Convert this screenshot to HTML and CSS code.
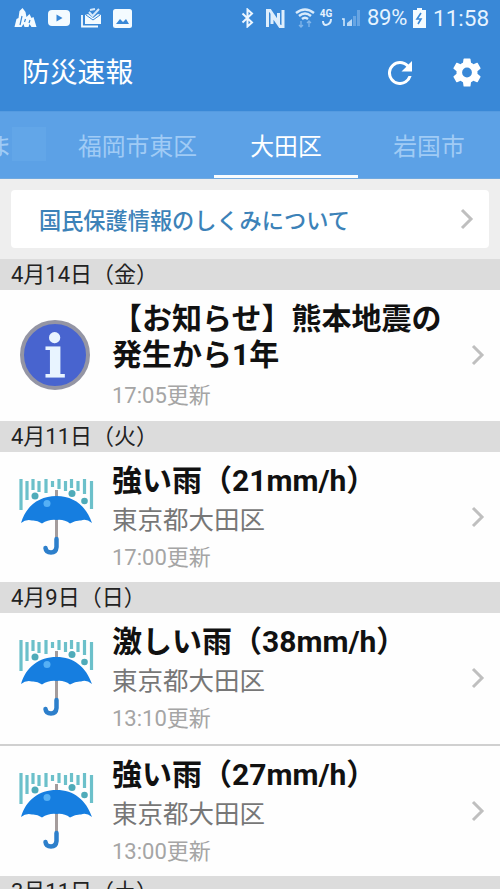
FILE: index.html
```html
<!DOCTYPE html>
<html lang="ja">
<head>
<meta charset="utf-8">
<title>防災速報</title>
<link rel="stylesheet" href="styles.css">
</head>
<body>
<svg width="0" height="0" class="defs">
  <symbol id="chevron" viewBox="0 0 14 22"><path d="M2 2l9 9-9 9" fill="none" stroke="currentColor" stroke-width="3"/></symbol>
  <symbol id="umbrella" viewBox="0 0 76 78">
    <g stroke="#6cc0ca" stroke-width="3.200">
      <path d="M3 1v31M9 3v19M15 1v11M21 3v11M28 1v14M34.500 3v6M41 1v10M47.500 3v10M53.500 1v9M60 3v10M66.500 1v15M73.500 3v28"/>
    </g>
    <g fill="#4fabb9"><circle cx="17" cy="18" r="3.500"/><circle cx="54" cy="15.500" r="3.500"/><circle cx="66.500" cy="23" r="3.300"/></g>
    <path d="M38.500 12v50" stroke="#a49c9c" stroke-width="3"/>
    <path d="M3 45C8 28 21 18 38.500 18S68 28 74 45Q68 40 63 42.500Q58 42 52 45.500Q46 41 38.500 42Q31 41 24 45.500Q19 42 14 42.500Q8 41 3 45Z" fill="#167ee0"/>
    <circle cx="29" cy="25.500" r="3.500" fill="#55b0f5"/>
    <path d="M38.500 61v8q-.5 5.500-5.500 5.500T27.500 70" fill="none" stroke="#2d7fcb" stroke-width="4.500" stroke-linecap="round"/>
  </symbol>
</svg>
<header class="header">
  <div class="status">
    <div class="notices">
      <svg width="24" height="22" viewBox="0 0 24 22"><path d="M1.500 20l2-8 2-1 1-7 3-3 3 4 1 5 3-3 2 4 2-1 3 10h-5l-2-3-1 3h-4l-1-3-2 3z" fill="#f4fbff"/><path d="M7 18l2-9M11.500 15l1-3M16 16l1-3" stroke="#3988d7" stroke-width="1.200"/></svg>
      <svg width="22" height="16" viewBox="0 0 22 16"><rect width="22" height="16" rx="4" fill="#f4fbff"/><path d="M8.500 4.500l6 3.500-6 3.500z" fill="#3988d7"/></svg>
      <svg width="21" height="20" viewBox="0 0 21 20"><path d="M1 7v11.500h16" fill="none" stroke="#f4fbff" stroke-width="1.800"/><path d="M4 7l3-1 5 4 5-4 3 1v9H4z" fill="#f4fbff"/><path d="M5 7l7 5 7-5" fill="none" stroke="#3988d7"/><path d="M8 4l3.500 4L18 1M9 2l5-1" fill="none" stroke="#d4e8fb" stroke-width="2"/></svg>
      <svg width="19" height="19" viewBox="0 0 19 19"><rect width="19" height="19" rx="2.500" fill="#f4fbff"/><path d="M3 15l4-5 3 3 3-3 3 5z" fill="#3988d7"/></svg>
    </div>
    <div class="indicators">
      <svg class="bt" width="13" height="20" viewBox="0 0 13 20"><path d="M1.500 5.500l9.500 9-4.500 4V1.500l4.500 4-9.500 9" fill="none" stroke="#ecf6ff" stroke-width="2"/></svg>
      <svg class="nfc" width="19" height="19" viewBox="0 0 19 19"><path d="M1.500 18V1.500H4L12.500 14V4M17 1v16.500h-3L6 6v9" fill="none" stroke="#deeefc" stroke-width="3"/></svg>
      <svg class="wifi" width="20" height="20" viewBox="0 0 20 20"><path d="M1 5q9-7 18 0M4 8q6-5 12 0M7 11q3-2.500 6 0" fill="none" stroke="#d9ebfb" stroke-width="2.400"/><path d="M6 13v6m-2-2l2 2 2-2M14 19v-6m-2 2l2-2 2 2" fill="none" stroke="#82b6ea" stroke-width="1.300"/></svg>
      <span class="net"><span class="net-label">4G</span><svg width="13" height="8" viewBox="0 0 13 8"><path d="M3 2q0 4 3 4 5-1 5-6" fill="none" stroke="#d9ebfb" stroke-width="2"/></svg></span>
      <svg class="signal" width="20" height="18" viewBox="0 0 20 18"><path d="M1 10h2v7" fill="none" stroke="#d9ebfb" stroke-width="1.500"/><path d="M6 17v-3l5-4v7z" fill="#b9d8f6"/><path d="M12 17V7h3v10zM16 17V1h3v16z" fill="#68a5e3"/></svg>
      <span class="percent">89%</span>
      <svg class="battery" width="13" height="20" viewBox="0 0 13 20"><path d="M4 0h5v2h4v18H0V2h4z" fill="#f4fbff"/><path d="M8 5l-4 6h4l-3 5" fill="none" stroke="#3988d7" stroke-width="1.600"/></svg>
      <span class="clock">11:58</span>
    </div>
  </div>
  <div class="appbar">
    <h1 class="app-title">防災速報</h1>
    <svg class="refresh" width="24" height="24" viewBox="4 4 16 16"><path d="M17.650 6.350A7.958 7.958 0 0 0 12 4a8 8 0 1 0 7.730 10h-2.080A6 6 0 1 1 12 6c1.660 0 3.140.69 4.220 1.780L13 11h7V4z" fill="#fff"/></svg>
    <svg class="gear" width="28" height="29" viewBox="2 2 20 20"><path d="M19.430 12.980c.04-.32.070-.64.070-.98s-.03-.66-.07-.98l2.110-1.650c.19-.15.240-.42.120-.64l-2-3.460c-.12-.22-.39-.3-.61-.22l-2.490 1c-.52-.4-1.080-.73-1.690-.98l-.38-2.650A.488.488 0 0 0 14 2h-4c-.25 0-.46.180-.49.420l-.38 2.650c-.61.250-1.170.590-1.690.980l-2.490-1c-.23-.09-.49 0-.61.220l-2 3.460c-.13.220-.07.490.120.640l2.110 1.650c-.04.320-.07.650-.07.980s.03.660.070.980l-2.110 1.650c-.19.150-.24.420-.12.640l2 3.460c.12.220.39.300.61.220l2.490-1c.52.400 1.080.730 1.690.980l.38 2.650c.03.240.24.420.49.420h4c.25 0 .46-.18.490-.42l.38-2.650c.61-.25 1.170-.59 1.690-.98l2.490 1c.23.090.49 0 .61-.22l2-3.460c.12-.22.070-.49-.12-.64zM12 15.500a3.500 3.500 0 1 1 0-7 3.500 3.500 0 0 1 0 7z" fill="#fff"/></svg>
  </div>
</header>
<nav class="tabs">
  <span class="tab tab-cut"><span class="cut-text">ま</span><span class="fade"></span></span>
  <span class="tab">福岡市東区</span>
  <span class="tab tab-active">大田区</span>
  <span class="tab">岩国市</span>
</nav>
<div class="banner">
  <a class="card"><span>国民保護情報のしくみについて</span><svg class="chevron" width="14" height="22"><use href="#chevron"/></svg></a>
</div>
<main>
  <h2 class="date">4月14日（金）</h2>
  <article class="item">
    <div class="icon"><div class="info">i</div></div>
    <div class="body"><h3 class="title title-notice">【お知らせ】熊本地震の<br>発生から1年</h3><p class="time">17:05更新</p></div>
    <svg class="chevron" width="14" height="22"><use href="#chevron"/></svg>
  </article>
  <h2 class="date">4月11日（火）</h2>
  <article class="item">
    <div class="icon"><svg width="76" height="78"><use href="#umbrella"/></svg></div>
    <div class="body"><h3 class="title">強い雨（21mm/h）</h3><p class="place">東京都大田区</p><p class="time">17:00更新</p></div>
    <svg class="chevron" width="14" height="22"><use href="#chevron"/></svg>
  </article>
  <h2 class="date">4月9日（日）</h2>
  <article class="item">
    <div class="icon"><svg width="76" height="78"><use href="#umbrella"/></svg></div>
    <div class="body"><h3 class="title">激しい雨（38mm/h）</h3><p class="place">東京都大田区</p><p class="time">13:10更新</p></div>
    <svg class="chevron" width="14" height="22"><use href="#chevron"/></svg>
  </article>
  <article class="item item-next">
    <div class="icon"><svg width="76" height="78"><use href="#umbrella"/></svg></div>
    <div class="body"><h3 class="title">強い雨（27mm/h）</h3><p class="place">東京都大田区</p><p class="time">13:00更新</p></div>
    <svg class="chevron" width="14" height="22"><use href="#chevron"/></svg>
  </article>
  <h2 class="date">3月11日（土）</h2>
</main>
</body>
</html>
```
FILE: styles.css
```css
* { box-sizing: border-box; }
html { height: 889px; overflow: hidden; }
body {
  margin: 0;
  width: 500px;
  height: 889px;
  overflow: hidden;
  background: #fefefe;
  font-family: Roboto, "Noto Sans CJK JP", sans-serif;
}
h1, h2, h3, p { margin: 0; font-weight: 400; white-space: nowrap; }
svg { display: block; flex: none; }
.defs { position: absolute; }

.header { height: 111px; background: #3988d7; color: #fff; }
.status { height: 36px; display: flex; justify-content: space-between; padding: 0 11px 0 13px; }
.notices { display: flex; align-items: center; gap: 11px; }
.indicators { display: flex; align-items: center; color: #e6f3ff; }
.bt { margin-right: 12px; }
.nfc { margin-right: 10px; }
.wifi { margin-right: 4px; }
.net { display: flex; flex-direction: column; align-items: center; width: 14px; margin-right: 8px; }
.net-label { font-size: 10px; line-height: 10px; font-weight: 700; }
.signal { margin-right: 6px; }
.percent { width: 46px; font-size: 22px; line-height: 36px; letter-spacing: -0.3px; }
.battery { margin-right: 7px; }
.clock { width: 56px; font-size: 22.5px; line-height: 37px; }

.appbar { height: 75px; display: flex; align-items: center; padding: 0 19px 2px 22px; }
.app-title { flex: 1; font-size: 27.8px; line-height: 40px; padding-top: 1px; }
.refresh { margin-right: 41px; }

.tabs {
  height: 68px;
  display: grid;
  grid-template-columns: 61px 153px 144px 142px;
  background: #5ca1e6;
  border-top: 1px solid #559be1;
  border-bottom: 1px solid #70a9e0;
}
.tab {
  display: flex;
  align-items: center;
  justify-content: center;
  padding-top: 1px;
  border-bottom: 3px solid transparent;
  font-size: 23.8px;
  color: #a0cbf5;
  white-space: nowrap;
}
.tab-cut { justify-content: flex-start; overflow: hidden; }
.cut-text { margin-left: -12px; }
.fade { width: 34px; height: 34px; background: #62a6e8; }
.tab-active { color: #fff; border-bottom-color: #f8fcff; }

.banner { height: 80px; padding: 11px; background: #eee; }
.card {
  height: 58px;
  display: flex;
  align-items: center;
  justify-content: space-between;
  padding: 0 15px 0 28px;
  border-radius: 4px;
  background: #fff;
  color: #3c82b8;
  font-size: 22.2px;
  font-weight: 500;
}
.chevron { color: #bfbfbf; }

.date {
  height: 31px;
  padding-left: 11px;
  background: #dcdcdc;
  color: #222;
  font-size: 22px;
  line-height: 32px;
}
.item { height: 130.500px; display: flex; align-items: center; padding-right: 15px; }
.item-next { height: 132.500px; border-top: 2px solid #d0d0d0; }
.icon { width: 112px; padding-left: 18px; }
.info {
  width: 70px;
  height: 70px;
  margin-left: 2px;
  border: 4px solid #9495a4;
  border-radius: 50%;
  background: #4864cf;
  color: #e8f4ff;
  font: 700 60px/66px "DejaVu Serif", serif;
  text-align: center;
}
.body { flex: 1; align-self: flex-start; padding-top: 11px; }
.title { height: 37px; font-size: 30px; line-height: 35px; font-weight: 700; color: #111; }
.title-notice { height: 76px; line-height: 35.500px; }
.place { height: 39px; font-size: 25.500px; line-height: 40px; color: #777; }
.time { font-size: 22px; line-height: 37px; color: #a5a5a5; }
```
